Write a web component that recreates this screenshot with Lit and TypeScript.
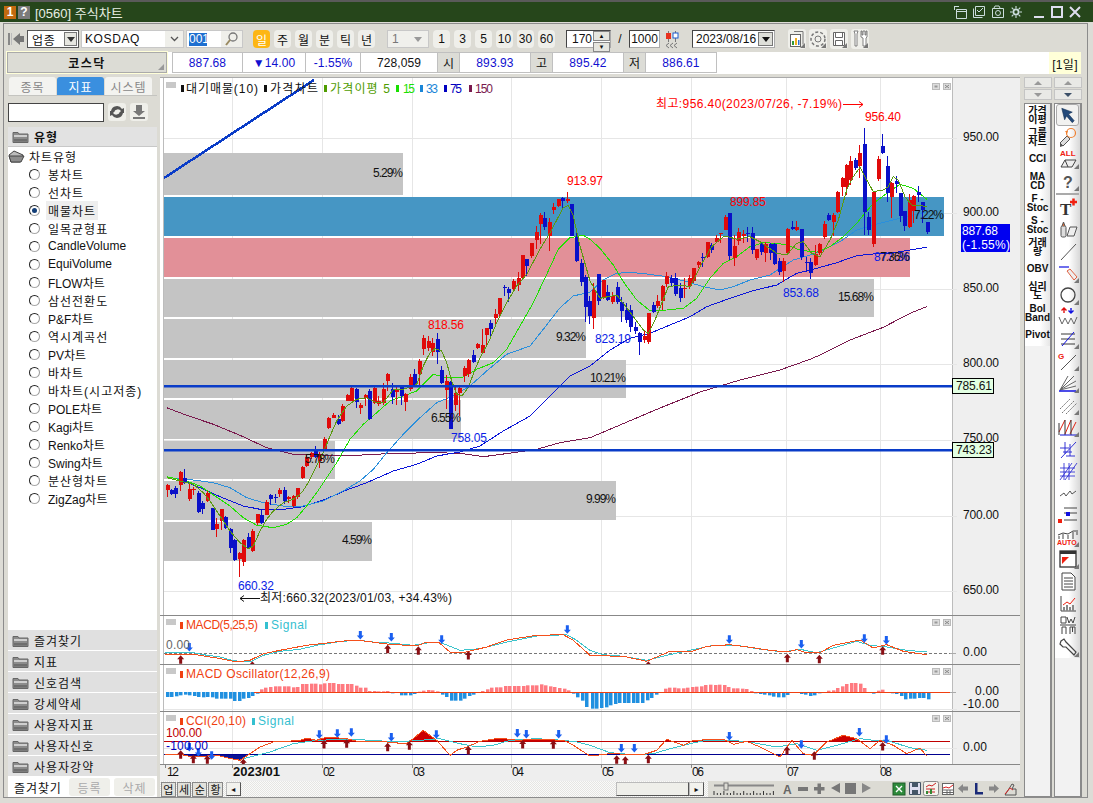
import { LitElement, html, svg, css } from 'lit';
import { customElement } from 'lit/decorators.js';

type Pt = [number, number];
// candle: zoom x, colour, body top, body bottom, wick top, wick bottom
type Candle = [number, string, number, number, number, number];

// the traces below were read off 3x crops, ox/oy is the crop origin
const toPage = (ox: number, oy: number, pts: number[][]): Pt[] =>
  pts.map(([x, y]) => [ox + x / 3, oy + y / 3]);
const mk = (ox: number, oy: number, rows: Candle[]): Candle[] =>
  rows.map(([x, c, t, b, wt, wb]) => [ox + x / 3, c, oy + t / 3, oy + b / 3, oy + wt / 3, oy + wb / 3]);

const CANDLES: Candle[] = [
  ...mk(160, 346, [
    [20,'r',418,432,415,455],[33,'b',432,444,428,446],[46,'b',425,443,420,456],[60,'r',378,418,375,435],
    [73,'b',395,410,368,412],[87,'r',428,458,415,465],[100,'r',428,432,422,445],[113,'b',440,497,436,503],
    [127,'b',470,488,465,503],[141,'r',442,465,436,470],[155,'b',487,552,485,552],[168,'r',533,547,515,573],
    [182,'r',490,525,488,550],[195,'b',513,545,510,548],[209,'b',548,605,545,620],[222,'b',582,642,580,645],
    [236,'r',620,638,618,692],[249,'r',582,648,580,660],[263,'b',573,605,562,608],[276,'r',556,615,550,618],
    [290,'r',505,533,503,536],[303,'b',507,532,490,535],[317,'r',468,507,462,508],[330,'b',447,460,443,475],
    [344,'b',454,458,445,472],[357,'r',431,443,425,453],[371,'b',432,465,422,472],[384,'r',453,460,450,472],
    [398,'r',450,480,447,484],[411,'r',427,454,425,457],[425,'r',363,396,360,398],[438,'r',332,358,328,365],
    [452,'r',322,335,318,340],[465,'b',313,333,300,335],[478,'r',325,345,318,365],[492,'r',278,310,272,312],
    [505,'r',215,244,212,247],[519,'r',207,215,202,218],[533,'b',220,235,208,237],[546,'r',180,225,175,228],
    [560,'r',148,165,145,166],[574,'r',126,165,124,166],[587,'b',130,170,126,185],[601,'r',178,188,172,205],
    [614,'r',148,158,143,180],[628,'b',135,220,128,222],[641,'r',126,172,123,175],[655,'r',165,174,150,180],
    [668,'r',128,170,110,175],[681,'r',85,105,82,135],[695,'b',130,155,112,175],[708,'r',128,136,122,175],
    [722,'b',124,152,118,177],[736,'r',145,170,140,195],[749,'r',93,130,85,135],[763,'b',85,120,70,125],
    [776,'r',45,85,40,120],
  ]),
  ...mk(160, 76, [
    [790,'r',786,819,777,837],[803,'r',795,816,780,825],[817,'r',800,828,786,840],[830,'b',788,828,770,863],
  ]),
  ...mk(160, 346, [
    [843,'b',72,110,60,115],[857,'r',105,133,88,190],[870,'b',108,248,105,250],[884,'r',142,178,120,195],
    [898,'r',125,140,120,210],[911,'r',65,90,60,108],[925,'r',43,85,40,95],[938,'b',27,48,12,50],
  ]),
  ...mk(160, 76, [
    [952,'r',804,816,801,820],[965,'r',807,831,758,834],[978,'r',756,778,755,805],[990,'b',740,758,732,788],
    [1005,'r',714,725,700,752],[1018,'r',667,715,665,718],[1032,'b',633,635,628,660],[1045,'b',640,652,632,677],
    [1058,'r',615,640,610,650],[1073,'r',605,625,588,645],[1086,'r',537,605,537,607],[1099,'b',548,570,548,598],
    [1113,'r',502,542,500,545],[1127,'r',468,492,450,518],[1140,'r',418,445,412,505],[1153,'b',427,455,408,462],
    [1167,'r',438,480,425,525],[1180,'r',393,402,380,412],[1194,'r',370,390,368,392],[1207,'b',365,373,362,400],
    [1221,'r',370,375,348,382],[1234,'b',385,482,385,482],[1248,'b',482,555,466,558],[1262,'b',562,618,548,628],
    [1275,'b',602,692,598,740],[1288,'b',675,720,660,745],
  ]),
  ...mk(590, 90, [
    [9,'r',600,685,580,718],[24,'b',552,632,552,645],[38,'r',570,622,570,628],[52,'b',605,628,585,632],
    [66,'r',617,635,605,640],[80,'b',590,635,575,640],[93,'b',635,662,620,695],[107,'b',660,690,640,700],
    [120,'b',660,712,645,725],[134,'b',712,725,695,730],[147,'b',730,758,725,795],[161,'r',738,750,720,760],
    [174,'r',668,755,668,760],[188,'b',645,665,635,668],[201,'r',632,648,615,655],[215,'r',588,632,585,660],
    [228,'r',558,582,545,590],[242,'b',565,580,555,590],[256,'b',563,610,550,620],[269,'b',595,625,578,635],
    [282,'r',595,598,565,625],[296,'r',565,590,555,598],[309,'r',533,572,533,578],[323,'r',515,525,512,532],
    [336,'b',500,503,490,532],[350,'r',456,500,455,503],[364,'b',464,480,460,490],[377,'r',444,455,435,460],
    [391,'r',430,432,428,457],[404,'r',380,418,375,420],[417,'b',370,500,370,510],[431,'r',468,505,435,528],
    [444,'r',425,452,415,465],[458,'r',433,440,420,460],[472,'b',430,432,410,455],[485,'b',430,482,410,490],
    [498,'r',478,505,478,510],[512,'b',462,485,455,495],[526,'r',462,488,455,515],[540,'b',463,490,460,510],
    [552,'b',463,522,460,525],[566,'b',512,545,505,555],[579,'r',512,542,505,578],[592,'r',417,490,415,495],
    [606,'b',410,416,392,420],[619,'r',410,418,392,422],[633,'b',417,500,417,510],[647,'b',517,520,500,545],
    [660,'b',515,548,505,568],[674,'r',492,525,465,528],[687,'r',462,490,460,495],[701,'r',402,442,392,445],
    [714,'b',376,392,370,395],[728,'r',374,395,370,440],[741,'r',306,367,304,370],[755,'r',263,290,262,320],
    [768,'r',225,290,222,315],[781,'r',212,270,198,285],[795,'b',210,235,205,240],[808,'r',188,228,165,265],
    [822,'b',162,365,114,435],[835,'b',382,420,365,435],[849,'r',305,460,303,472],[863,'r',207,268,198,272],
    [876,'b',168,190,132,192],[890,'b',228,308,198,335],[903,'r',278,320,275,382],[917,'b',272,282,258,310],
    [930,'b',310,380,308,395],[943,'b',363,408,363,422],[957,'r',330,412,313,415],[970,'r',318,362,315,400],
    [984,'b',307,317,288,335],[997,'b',335,360,335,398],[1011,'b',397,428,395,432],
  ]),
];

const MA5: Pt[] = [
  ...toPage(160, 346, [[20,395],[60,405],[100,415],[130,440],[150,465],[180,510],[210,555],[240,590],[265,608],[280,600],[300,555],[320,520],[340,495],[370,470],[400,460],[425,440],[445,410],[470,360],[490,320],[510,270],[530,225],[560,180],[590,160],[620,155],[650,170],[670,170],[700,130],[730,130],[770,115],[790,60],[810,20],[825,8],[845,15],[860,50],[875,105],[890,145],[905,150],[925,125],[945,70],[965,25]]),
  ...toPage(160, 76, [[985,800],[1010,740],[1040,680],[1070,630],[1100,595],[1140,520],[1170,470],[1210,395],[1225,388],[1240,420],[1260,510],[1290,615]]),
  ...toPage(590, 90, [[30,625],[80,615],[100,640],[130,680],[160,720],[175,730],[195,690],[215,640],[235,590],[270,585],[300,590],[330,530],[365,470],[400,440],[415,440],[440,448],[480,440],[510,455],[560,490],[590,495],[620,460],[640,455],[665,490],[690,500],[720,450],[745,390],[770,300],[790,260],[810,232],[830,270],[850,305],[880,300],[895,290],[910,260],[925,270],[945,320],[965,345],[985,345],[1010,350]]),
];
const MA15: Pt[] = [
  ...toPage(160, 346, [[20,392],[80,405],[120,420],[165,450],[210,480],[250,515],[290,538],[340,545],[380,535],[410,515],[440,480],[470,440],[500,395],[530,350],[570,280],[610,235],[650,200],[690,165],[730,150],[770,135],[820,85],[860,95],[905,95],[950,70],[1000,50],[1040,10]]),
  ...toPage(160, 76, [[1080,750],[1120,680],[1160,595],[1195,520],[1230,485],[1270,478],[1290,490]]),
  ...toPage(590, 90, [[30,475],[70,525],[100,575],[140,630],[180,662],[230,660],[280,655],[320,625],[360,565],[400,520],[440,500],[480,470],[520,458],[560,460],[590,465],[630,480],[680,487],[720,470],[760,440],[800,400],[850,340],[890,310],[930,283],[970,295],[1010,328]]),
];
const MA33: Pt[] = [
  ...toPage(160, 346, [[20,392],[60,400],[100,402],[160,410],[210,425],[260,455],[310,470],[370,480],[430,480],[490,465],[550,435],[600,405],[640,370],[680,320],[730,265],[780,215],[830,170],[880,150],[930,120],[980,75],[1040,25],[1110,0]]),
  ...toPage(160, 76, [[1150,760],[1200,695],[1240,660],[1290,648]]),
  ...toPage(590, 90, [[40,570],[80,550],[120,547],[170,552],[230,560],[290,575],[340,590],[390,600],[430,590],[480,570],[540,555],[570,535],[610,510],[660,495],[700,480],[750,455],[800,420],[850,405],[900,392],[950,380],[1010,365]]),
];
const MA75: Pt[] = [
  ...toPage(160, 346, [[20,392],[60,400],[120,425],[180,452],[250,480],[300,490],[370,490],[430,482],[500,458],[560,432],[620,410],[700,375],[770,355],[830,330],[900,318],[960,300],[1030,255],[1110,210],[1180,140],[1230,90],[1290,60]]),
  ...toPage(590, 90, [[60,780],[120,745],[180,730],[240,705],[300,680],[350,650],[420,625],[490,602],[560,585],[620,550],[680,535],[740,518],[800,497],[850,492],[900,490],[960,480],[1010,472]]),
];
const MA150: Pt[] = [
  ...toPage(160, 346, [[20,185],[80,208],[160,235],[240,268],[320,305],[400,325],[480,328],[560,330],[640,325],[720,322],[820,320],[900,322],[970,332],[1060,320],[1130,310],[1200,290],[1290,275]]),
  [620, 425],[660, 408],[700, 392],[740, 380],[780, 370],
  ...toPage(590, 90, [[660,808],[690,795],[780,750],[880,712],[960,670],[1010,650]]),
];

const MACD_SIG: Pt[] = [
  ...toPage(160, 612, [[15,122],[100,122],[130,128],[180,135],[220,146],[270,150],[310,130],[360,118],[420,112],[470,100],[530,90],[590,84],[640,90],[700,94],[760,100],[820,90],[850,95],[900,115],[960,110],[1040,90],[1130,72],[1220,68],[1250,85],[1290,115]]),
  ...toPage(590, 612, [[40,128],[100,133],[170,145],[230,130],[300,115],[370,100],[440,100],[500,110],[580,120],[630,112],[680,122],[740,105],[800,88],[840,100],[890,105],[950,115],[1010,120]]),
];
const MACD_LINE: Pt[] = [
  ...toPage(160, 612, [[15,127],[100,127],[170,138],[230,150],[270,145],[310,125],[360,115],[440,100],[500,93],[580,84],[620,88],[680,96],[770,102],[800,90],[835,90],[870,120],[910,122],[980,105],[1040,84],[1130,70],[1210,68],[1240,85],[1290,130]]),
  ...toPage(590, 612, [[60,132],[110,135],[170,148],[240,118],[300,120],[350,103],[420,98],[480,106],[540,115],[590,120],[620,113],[650,122],[690,122],[730,100],[810,84],[850,108],[890,98],[940,118],[1010,128]]),
];
const CCI_SIG: Pt[] = [
  ...toPage(160, 612, [[250,440],[330,420],[400,395],[470,385],[560,382],[640,385],[700,390],[780,385],[840,380],[900,395],[950,405],[1000,400],[1050,385],[1130,380],[1210,385],[1250,390],[1290,400]]),
  ...toPage(590, 612, [[60,422],[130,428],[190,425],[240,410],[300,395],[350,385],[430,385],[490,392],[560,405],[620,395],[680,415],[740,400],[810,380],[850,385],[900,388],[960,407],[1010,415]]),
];
const CCI_LINE: Pt[] = [
  ...toPage(160, 612, [[15,427],[60,427],[100,435],[140,432],[170,430],[200,437],[240,445],[270,425],[300,405],[340,390],[380,388],[420,385],[440,378],[470,385],[500,375],[560,380],[600,390],[660,388],[700,392],[740,395],[760,380],[790,355],[830,385],[870,430],[890,415],[920,405],[960,388],[1020,378],[1070,385],[1130,382],[1210,385],[1240,400],[1290,432]]),
  ...toPage(590, 612, [[60,425],[160,428],[200,415],[230,382],[280,400],[310,385],[400,382],[430,397],[470,388],[510,405],[570,435],[605,385],[640,425],[670,430],[710,390],[760,370],[800,380],[840,410],[870,385],[910,400],[950,425],[990,408],[1010,432]]),
];

// oscillator bars: zoom x, height in zoom px (up is positive)
const OSC: Pt[] = [
  ...toPage(160, 0, [[20,-15],[33,-15],[47,-13],[60,-10],[74,-8],[87,-10],[101,-12],[114,-15],[128,-16],[141,-15],[155,-16],[168,-20],[182,-20],[195,-20],[209,-20],[222,-27],[236,-27],[249,-20],[263,-18],[276,-12],[290,-5],[303,8],[316,13],[330,15],[344,17],[357,17],[371,17],[384,17],[398,14],[411,15],[425,24],[438,24],[452,25],[465,25],[479,23],[492,26],[506,27],[520,27],[533,24],[547,24],[560,24],[574,24],[587,19],[601,13],[614,13],[628,3],[641,3],[655,2],[668,2],[682,3],[695,-4],[709,-3],[722,-10],[736,-10],[750,-10],[763,-6],[777,1],[790,4],[804,6],[817,5],[831,2],[845,-8],[858,-15],[872,-26],[885,-26],[899,-26],[912,-20],[926,-12],[939,-8],[953,-2],[966,3],[980,8],[993,13],[1007,14],[1020,14],[1034,18],[1048,18],[1061,18],[1075,18],[1088,18],[1102,20],[1115,20],[1129,20],[1143,23],[1156,20],[1170,17],[1183,15],[1197,12],[1211,10],[1224,5],[1238,-5],[1251,-16],[1265,-26],[1278,-45]]),
  ...toPage(590, 0, [[5,-50],[19,-50],[33,-48],[47,-46],[60,-40],[74,-36],[88,-33],[101,-33],[115,-33],[129,-33],[142,-33],[156,-33],[170,-25],[183,-18],[197,-8],[210,-2],[224,10],[238,13],[251,13],[265,11],[278,11],[292,13],[306,15],[319,16],[333,17],[346,21],[360,22],[374,21],[387,22],[401,21],[414,15],[428,11],[442,11],[455,10],[469,9],[482,3],[496,-4],[510,-6],[523,-8],[537,-10],[550,-14],[564,-16],[578,-16],[591,-9],[605,-2],[632,-6],[646,-8],[660,-12],[673,-10],[687,-4],[714,4],[728,5],[741,12],[755,17],[768,24],[782,27],[796,27],[809,25],[823,12],[836,-3],[850,-5],[864,4],[877,7],[891,-2],[905,-4],[918,-6],[932,-12],[946,-22],[959,-20],[973,-20],[987,-18],[1000,-18],[1014,-22]]),
];

// x in zoom px, top of the arrow in zoom px
const MACD_UP = [...toPage(160, 612, [[62,130],[277,148],[683,98],[775,103],[925,117]]), ...toPage(590, 612, [[175,148],[592,125],[688,128],[878,103]])];
const MACD_DOWN = [...toPage(160, 612, [[88,93],[601,57],[694,63],[845,70],[1222,40]]), ...toPage(590, 612, [[418,70],[634,84],[823,67],[889,72]])];
const CCI_UP = [...toPage(160, 612, [[62,415],[100,428],[142,430],[250,440],[492,384],[560,382],[683,392],[748,388],[925,402],[1088,384],[1180,385]]), ...toPage(590, 612, [[80,430],[106,433],[175,428],[591,403],[673,418],[878,390]])];
const CCI_DOWN = [...toPage(160, 612, [[88,393],[115,408],[155,418],[478,355],[532,352],[574,349],[694,363],[829,355],[1072,351],[1099,354],[1196,354]]), ...toPage(590, 612, [[94,396],[133,396],[418,360],[634,385],[808,348],[889,370]])];

const BANDS = [
  { y: 153, h: 42, w: 403, c: '#c4c4c4', label: '5.29%', ly: 173 },
  { y: 197, h: 39, w: 944, c: '#4696c4', label: '', ly: 0 },
  { y: 238, h: 39, w: 910, c: '#e29098', label: '', ly: 0 },
  { y: 279, h: 38, w: 874, c: '#c4c4c4', label: '15.68%', ly: 297 },
  { y: 319, h: 39, w: 586, c: '#c4c4c4', label: '9.32%', ly: 337 },
  { y: 360, h: 38, w: 626, c: '#c4c4c4', label: '10.21%', ly: 378 },
  { y: 400, h: 39, w: 461, c: '#c4c4c4', label: '6.55%', ly: 418 },
  { y: 441, h: 38, w: 335, c: '#c4c4c4', label: '5.78%', ly: 459 },
  { y: 481, h: 39, w: 616, c: '#c4c4c4', label: '9.99%', ly: 499 },
  { y: 522, h: 39, w: 372, c: '#c4c4c4', label: '4.59%', ly: 540 },
];

const GRID_X = [232, 322, 412, 511, 601, 691, 786, 880];
const GRID_Y = [138, 213, 289, 364, 440, 516, 591];
const AXIS: [number, string][] = [[137, '950.00'], [212, '900.00'], [288, '850.00'], [363, '800.00'], [438, '750.00'], [515, '700.00'], [590, '650.00']];

const TREE = ['봉차트', '선차트', '매물차트', '일목균형표', 'CandleVolume', 'EquiVolume', 'FLOW차트', '삼선전환도', 'P&F차트', '역시계곡선', 'PV차트', '바차트', '바차트(시고저종)', 'POLE차트', 'Kagi차트', 'Renko차트', 'Swing차트', '분산형차트', 'ZigZag차트'];
const FOLDERS = ['즐겨찾기', '지표', '신호검색', '강세약세', '사용자지표', '사용자신호', '사용자강약'];
const INDICATORS = [['가격', '이평'], ['그룹', '차트'], ['CCI'], ['MA', 'CD'], ['F -', 'Stoc'], ['S -', 'Stoc'], ['거래', '량'], ['OBV'], ['심리', '도'], ['Bol', 'Band'], ['Pivot']];

const pts = (p: Pt[]) => p.map(([x, y]) => `${x.toFixed(1)},${y.toFixed(1)}`).join(' ');
// the app draws aliased GDI lines, so no antialiasing here either
const line = (p: Pt[], color: string, w = 1) =>
  svg`<polyline points=${pts(p)} fill="none" stroke=${color} stroke-width=${w} stroke-linejoin="round" shape-rendering="crispEdges"></polyline>`;

// the original font is a bitmap one: 12px for hangul, 6px for everything else
const textW = (s: string) => [...s].reduce((w, c) => w + (/[가-힣]/.test(c) ? 12 : 6), 0);
const label = (x: number, y: number, s: string, cls = '') =>
  svg`<text class=${'t ' + cls} x=${x} y=${y + 4} textLength=${textW(s)} lengthAdjust="spacing">${s}</text>`;
const labelEnd = (xe: number, y: number, s: string, cls = '') => label(xe - textW(s), y, s, cls);

const upArrow = ([x, y]: Pt) =>
  svg`<path d="M${x} ${y}l3.5 4h-2v4.5h-3V${y + 4}h-2z" fill="#8a0f14"></path>`;
const downArrow = ([x, y]: Pt) =>
  svg`<path d="M${x} ${y + 8.5}l3.5-4h-2V${y}h-3v4.5h-2z" fill="#1a5ff0"></path>`;

const paneBtns = (y: number) => svg`
  <rect x="932.5" y=${y + 0.5} width="7" height="6" fill="#ddd" stroke="#bbb"></rect>
  <rect x="934.5" y=${y + 2.5} width="3" height="2" fill="#999"></rect>
  <rect x="943.5" y=${y + 0.5} width="7" height="6" fill="#ddd" stroke="#bbb"></rect>
  <path d=${`M945 ${y + 2}l4 3m0-3l-4 3`} stroke="#888" fill="none"></path>`;

const legendDot = (x: number, y: number, c: string) => svg`<rect x=${x} y=${y} width="3" height="7" fill=${c}></rect>`;
const paneTag = (y: number) => svg`<rect x="166" y=${y} width="10" height="6" fill="#c8c8c8"></rect>`;

const folderIcon = html`<svg width="17" height="13" viewBox="0 0 17 13">
  <path d="M1 2.5h5l1 1.5h9v8.5H1z" fill="#8c8c8c" stroke="#666"></path>
  <path d="M2 5h13v2H2z" fill="#cfcfcf"></path>
  <path d="M2 9h13v2.500H2z" fill="#6e6e6e"></path>
</svg>`;
const openFolder = html`<svg width="17" height="13" viewBox="0 0 17 13">
  <path d="M1 5l5-4 9 4-3 7H3z" fill="#bdbdbd" stroke="#444"></path>
  <path d="M1 6h11l4 0-3 6H3z" fill="#8d8d8d" stroke="#444"></path>
</svg>`;

const toolIcon = (body: unknown, corner = false, pressed = false) => html`<div class="ic ${pressed ? 'pressed' : ''}">
  <svg width="22" height="22" viewBox="0 0 22 22">${body}</svg>
  ${corner ? html`<i class="corner"></i>` : ''}
</div>`;

const TOOLS = [
  toolIcon(svg`<path d="M5 4l11 4-4 2 6 7-2 2-6-7-2 4z" fill="#234a7a" stroke="#0d2a50" stroke-width=".6"></path>`, false, true),
  toolIcon(svg`<path d="M3 17l7-7 3 3-7 7z" fill="#ddd" stroke="#555"></path><path d="M3 17l3 3-3 1z" fill="#555"></path><circle cx="14" cy="7" r="4.500" fill="none" stroke="#f08030" stroke-width="1.200"></circle><path d="M8 5l3 0-1 3z" fill="#f08030"></path>`),
  toolIcon(svg`<text class="mini red-b" x="3" y="8">ALL</text><path d="M4 19l4-7h11l-4 7z" fill="#eee" stroke="#444"></path><path d="M8 12l3 7" stroke="#444"></path>`, true),
  toolIcon(svg`<text class="qm" x="6" y="18">?</text>`, true),
];
const TOOLS2 = [
  toolIcon(svg`<text class="tee" x="3" y="19">T</text><path d="M13 6h7M16.500 2.500v7" stroke="#f02010" stroke-width="2.500"></path>`),
  toolIcon(svg`<rect x="4" y="8" width="5" height="11" rx="1.500" fill="#ddd" stroke="#555"></rect><path d="M5 8l1.500-4 1.500 4" fill="#d87040" stroke="#555"></path><path d="M10 18l3-9h7l-3 9z" fill="#eee" stroke="#555"></path>`),
  toolIcon(svg`<path d="M4 20L19 4" stroke="#555"></path>`),
  toolIcon(svg`<path d="M2 5h10" stroke="#1010e0" stroke-width="1.200"></path><path d="M10 9l3-2 7 8-3 3z" fill="#eee" stroke="#e06040"></path>`, true),
  toolIcon(svg`<circle cx="11" cy="11" r="7" fill="none" stroke="#444" stroke-width="1.300"></circle>`, true),
  toolIcon(svg`<path d="M7 2v5M4.500 4.500L7 2l2.500 2.500" stroke="#e01010" fill="none" stroke-width="1.400"></path><path d="M14 2v5M11.500 4.500L14 7l2.500-2.500" stroke="#1010e0" fill="none" stroke-width="1.400"></path><path d="M2 11l3 7 3-6 3 6 3-6 3 6 3-7" stroke="#666" fill="none"></path>`),
  toolIcon(svg`<path d="M4 6h14M4 11h14M4 16h14" stroke="#222" stroke-width=".9"></path><path d="M5 18L17 4" stroke="#1010e0"></path>`, true),
  toolIcon(svg`<text class="mini red-b" x="1" y="9">G</text><path d="M4 20L19 5" stroke="#555"></path>`, true),
  toolIcon(svg`<path d="M3 18L17 4M3 18L19 9M3 18L19 14M3 18L11 4" stroke="#666" fill="none"></path><path d="M2 19h17" stroke="#1010e0" stroke-width="1.500"></path>`, true),
  toolIcon(svg`<path d="M3 15L13 5M5 19L17 7M9 20L20 9" stroke="#777" stroke-dasharray="2 1" fill="none"></path>`, true),
  toolIcon(svg`<path d="M2 16L8 4M8 18L14 4M13 18L19 6" stroke="#e02010" fill="none"></path><path d="M2 7v12M8 4v15M14 4v15" stroke="#333" fill="none"></path><path d="M3 19h17" stroke="#1010d0"></path>`, true),
  toolIcon(svg`<path d="M4 20L19 4M3 10h9M6 14h9M9 18h9M8 4v12M13 6v12" stroke="#2020d0" fill="none" stroke-width=".9"></path>`),
  toolIcon(svg`<path d="M3 20L15 3M8 20L20 3M3 8h15M3 12h15M3 16h15M7 3v17M12 3v17" stroke="#2020d0" fill="none" stroke-width=".8"></path>`),
  toolIcon(svg`<path d="M3 14l4-3 2 3 4-5 2 3 4-3" stroke="#555" fill="none"></path>`),
  toolIcon(svg`<path d="M7 4h13M7 9h13M7 16h13" stroke="#444" fill="none"></path><rect x="9" y="8" width="4" height="4" fill="#1010e0"></rect><rect x="1" y="15" width="4" height="4" fill="#f02010"></rect>`),
  toolIcon(svg`<path d="M1 9l5-2 5 1 5-3 3 0M2 10v3M6 8v5M11 9v4M16 6v7M20 4v5" stroke="#444" fill="none"></path><text class="auto" x="0" y="19">AUTO</text>`, true),
  toolIcon(svg`<rect x="3" y="3" width="16" height="16" fill="#fff" stroke="#333" stroke-width="1.300"></rect><path d="M3 3h16v3H3z" fill="#333"></path><path d="M5 9h7l-7 7z" fill="#f02010"></path>`, true),
  toolIcon(svg`<path d="M5 3h9l4 4v13H5z" fill="#fff" stroke="#444"></path><path d="M7 8h9M7 11h9M7 14h9M7 17h9" stroke="#444"></path>`),
  toolIcon(svg`<path d="M4 4v15h15" stroke="#444" fill="none"></path><path d="M6 13l4-3 3 2 5-6" stroke="#f02010" fill="none"></path><path d="M6 15h2v4H6zM9 13h2v6H9zM12 15h2v4h-2zM15 13h2v6h-2z" fill="#888"></path>`),
  toolIcon(svg`<path d="M4 3h5v6H4zM10 3l2 6 2-4 2 4 2-6M3 11h16M5 13v7M5 13h4v7M13 13v7M13 13h5v7M15.500 13v5" stroke="#444" fill="none"></path>`),
  toolIcon(svg`<path d="M4 5l3-2 2 3 2 2 8 8-2 3-8-8-3 0-3-3z" fill="none" stroke="#444" stroke-width="1.200"></path>`, true),
];

@customElement('app-root')
export class AppRoot extends LitElement {
  static styles = css`
    :host {
      display: block;
      width: 1093px;
      height: 803px;
      overflow: hidden;
      font: 12px "Liberation Sans", "Noto Sans CJK KR", sans-serif;
      color: #111;
    }
    .root {
      height: 803px;
      display: flex;
      flex-direction: column;
      background: #dddcd6;
    }
    svg { display: block; }

    /* title bar */
    .title {
      flex: none;
      height: 20px;
      border-top: 2px solid #5a5a5a;
      background: #26461b;
      color: #e8efe4;
      display: flex;
      align-items: center;
      padding: 0 12px 0 4px;
      font-size: 13px;
    }
    .badge {
      width: 12px;
      height: 13px;
      margin-right: 2px;
      background: #c26a10;
      color: #fff;
      font: bold 12px "Liberation Sans", sans-serif;
      text-align: center;
      line-height: 13px;
    }
    .badge.q { background: #7b7b7b; margin-right: 5px; }
    .title-icons { margin-left: auto; display: flex; gap: 5px; align-items: center; }
    .win { margin-left: 1px; }
    .win.min { margin-left: 7px; }

    .frame {
      flex: 1;
      margin: 1px 5px 5px 3px;
      border: 1px solid #8c8c8c;
      background: #dcdbd4;
      min-height: 0;
      display: flex;
      flex-direction: column;
    }

    /* first toolbar row */
    .bar1 {
      flex: none;
      margin-top: 4px;
      height: 22px;
      padding-left: 3px;
      display: flex;
      align-items: center;
    }
    .back { width: 18px; margin-right: 2px; }
    .field {
      height: 18px;
      background: #fff;
      border: 1px solid #555;
      box-sizing: border-box;
      display: flex;
      align-items: center;
      letter-spacing: .6px;
    }
    .sel1 { width: 52px; margin-right: 2px; padding-left: 4px; }
    .arrbtn {
      margin-left: auto;
      margin-right: 1px;
      width: 13px;
      height: 14px;
      border: 1px solid #777;
      background: #e6e6e0;
      box-sizing: border-box;
      display: flex;
      align-items: center;
      justify-content: center;
    }
    .tri { width: 0; height: 0; border: 4px solid transparent; border-top: 5px solid #333; border-bottom: 0; }
    .tri.g { border-top-color: #999; }
    .sel2 { width: 103px; margin-right: 2px; padding-left: 3px; border-color: #c8c8c8; }
    .chev {
      margin-left: auto;
      width: 18px;
      height: 16px;
      background: #efefea;
      color: #555;
      display: flex;
      align-items: center;
      justify-content: center;
    }
    .code { width: 57px; margin-right: 10px; padding-left: 2px; border-color: #c8c8c8; }
    .code b { background: #1f6fd0; color: #fff; font-weight: 400; letter-spacing: 0; height: 13px; line-height: 13px; width: 18px; }
    .search { margin-left: auto; width: 21px; height: 16px; background: #efefea; }
    .tb {
      width: 17px;
      height: 18px;
      margin-right: 4px;
      background: #efefea;
      border-radius: 4px;
      font-size: 12px;
      display: flex;
      align-items: center;
      justify-content: center;
      flex: none;
    }
    .tb.on { background: #fdb614; color: #fff; }
    .sel3 { width: 42px; margin: 0 4px 0 8px; padding-left: 4px; border-color: #c8c8c8; background: #f0f0ec; color: #777; }
    .sel3 .tri { margin-left: auto; margin-right: 6px; }
    .spin { width: 45px; margin: 0 0 0 7px; border-color: #444 #aaa #aaa #444; justify-content: flex-end; letter-spacing: 0; }
    .spinb { width: 17px; height: 16px; margin-left: 1px; display: flex; flex-direction: column; gap: 1px; }
    .spinb i { flex: 1; background: #e6e6e0; border: 1px solid #888; display: flex; align-items: center; justify-content: center; font: 7px "DejaVu Sans", sans-serif; }
    .slash { width: 18px; text-align: center; }
    .total { width: 31px; border-color: #444 #aaa #aaa #444; letter-spacing: 0; justify-content: center; }
    .date { width: 83px; margin-left: 12px; border-color: #444 #aaa #aaa #444; padding-left: 3px; letter-spacing: 0; }
    .date .arrbtn { width: 15px; background: #dedfd9; }
    .date .tri { border-top-color: #111; }
    .mid-ic { width: 16px; margin-left: 4px; }
    .end-ic { width: 18px; height: 20px; background: #efefea; border-radius: 3px; margin-left: 3px; position: relative; }
    .end-ic.first { margin-left: 13px; }
    .corner { position: absolute; right: 1px; bottom: 1px; width: 0; height: 0; border-left: 5px solid transparent; border-bottom: 5px solid #777; }

    /* second toolbar row */
    .bar2 {
      flex: none;
      margin-top: 2px;
      height: 22px;
      background: #fff;
      display: flex;
      align-items: stretch;
      margin-left: 2px;
      margin-right: 6px;
    }
    .market {
      width: 160px;
      box-sizing: border-box;
      background: #dcdcd5;
      border: 1px solid #aaa;
      outline: 1px solid #ffffd8;
      font-weight: 700;
      letter-spacing: 1.500px;
      display: flex;
      align-items: center;
      justify-content: center;
      position: relative;
      margin: 0 5px 1px 1px;
    }
    .grip { position: absolute; right: 2px; bottom: 2px; }
    .cell {
      box-sizing: border-box;
      border: 1px solid #c0c0c0;
      border-left: 0;
      display: flex;
      align-items: center;
      justify-content: center;
      color: #1010d0;
      margin-bottom: 1px;
      letter-spacing: .1px;
    }
    .cell.k { color: #111; background: #dcdcd6; }
    .cell.n { color: #111; }
    .cell.w1 { width: 71px; border-left: 1px solid #c0c0c0; }
    .cell.w2 { width: 63px; }
    .cell.w3 { width: 55px; }
    .cell.w4 { width: 77px; }
    .cell.w5 { width: 71px; }
    .cell.kw { width: 22px; }
    .range {
      margin-left: auto;
      width: 32px;
      background: #ffffd8;
      display: flex;
      align-items: center;
      justify-content: center;
      letter-spacing: .3px;
    }

    /* main area */
    .main {
      flex: 1;
      min-height: 0;
      margin-top: 3px;
      margin-left: 4px;
      display: flex;
    }
    .side {
      width: 149px;
      flex: none;
      display: flex;
      flex-direction: column;
      background: #fff;
    }
    .tabs { height: 18px; flex: none; display: flex; padding-left: 1px; background: #dcdbd4; border-bottom: 1px solid #c4c4c0; box-sizing: content-box; }
    .tab {
      width: 47px;
      margin-right: 1px;
      background: #f3f3f0;
      color: #888;
      border-radius: 3px 3px 0 0;
      display: flex;
      align-items: center;
      justify-content: center;
      letter-spacing: 1px;
    }
    .tab.on { background: #3a8fdf; color: #fff; }
    .finder { height: 31px; flex: none; background: #dcdbd4; display: flex; align-items: center; padding-top: 1px; box-sizing: border-box; }
    .finder .inp { width: 96px; height: 19px; box-sizing: border-box; border: 1px solid #444; background: #fff; margin-right: 4px; }
    .finder .ib { width: 18px; height: 18px; background: #efefea; border-radius: 3px; margin-right: 4px; }
    .head { height: 20px; flex: none; background: #e2e2e2; border-bottom: 1px solid #c8c8c8; box-sizing: border-box; display: flex; align-items: center; padding-left: 4px; font-weight: 700; letter-spacing: 1px; }
    .head svg { margin-right: 5px; }
    .tree { flex: 1; min-height: 0; }
    .row { height: 18px; display: flex; align-items: center; }
    .row.root-row { padding-left: 0; letter-spacing: 1px; }
    .row.root-row svg { margin-right: 4px; }
    .radio {
      width: 11px;
      height: 11px;
      box-sizing: border-box;
      margin: 0 8px 0 21px;
      border-radius: 50%;
      border: 1.500px solid;
      border-color: #222 #999 #aaa #222;
      display: flex;
      align-items: center;
      justify-content: center;
    }
    .radio.on::after { content: ""; width: 5px; height: 5px; border-radius: 50%; background: #123e78; }
    .rtext.h { letter-spacing: 1px; }
    .rtext.sel { background: #eeeeee; margin-left: -2px; padding: 1px 2px; }
    .folder {
      height: 20px;
      flex: none;
      background: #e0e0e0;
      border-bottom: 1px solid #fff;
      display: flex;
      align-items: center;
      padding-left: 4px;
      letter-spacing: 1px;
    }
    .folder svg { margin-right: 5px; }
    .foot { height: 20px; flex: none; display: flex; align-items: center; padding-left: 6px; letter-spacing: .9px; white-space: nowrap; }
    .foot-label { width: 55px; flex: none; }
    .fbtn { width: 41px; height: 18px; background: #efefea; color: #aaa; border-radius: 3px; display: flex; align-items: center; justify-content: center; margin-right: 4px; flex: none; }

    /* chart */
    .chart {
      width: 860px;
      flex: none;
      margin-left: 3px;
      background: #eee;
      border-top: 1px solid #aaa;
      display: flex;
      flex-direction: column;
    }
    .pane { flex: none; border-top: 1px solid #888; background: #fff; }
    .pane.first { border-top: 0; }
    .t { font: 12px "Liberation Sans", "Noto Sans CJK KR", sans-serif; fill: #111; }
    .ax { fill: #111; }
    .red { fill: #f00; }
    .blu { fill: #0a1ee6; }
    .grn { fill: #4f9c00; }
    .lime { fill: #19e000; }
    .sky { fill: #1a86d8; }
    .navy { fill: #0000c0; }
    .wine { fill: #7a1a4e; }
    .org { fill: #f04010; }
    .tea { fill: #34c0d0; }
    .gry { fill: #666; }
    .dred { fill: #c00000; }
    .wh { fill: #fff; }
    .bold { font-weight: 700; font-size: 13px; }
    .ahead { font-weight: 700; }

    .bottom {
      height: 16px;
      flex: none;
      display: flex;
      align-items: center;
      background: repeating-conic-gradient(#e6e6e2 0 25%, #fafafa 0 50%) 0 0 / 2px 2px;
    }
    .btab {
      width: 15px;
      height: 15px;
      box-sizing: border-box;
      border: 1px solid #888;
      background: #e2e2dc;
      font-size: 11px;
      margin-left: 1px;
      display: flex;
      align-items: center;
      justify-content: center;
    }
    .bbtn {
      width: 15px;
      height: 14px;
      margin-left: 3px;
      box-sizing: border-box;
      background: #f2f2ee;
      border: 1px solid #bbb;
      border-right-color: #555;
      border-bottom-color: #555;
      font: 8px "DejaVu Sans", sans-serif;
      display: flex;
      align-items: center;
      justify-content: center;
    }
    .thumb { margin-left: 375px; width: 75px; height: 14px; box-sizing: border-box; background: #efefea; border: 1px solid #bbb; border-right-color: #555; border-bottom-color: #555; }
    .bbtn.nx { margin-left: 0; }
    .ctrl { margin-left: 4px; flex: 1; height: 16px; display: flex; align-items: center; background: #dcdbd4; }

    /* right tool strips */
    .tools { width: 58px; flex: none; margin-left: 4px; display: flex; gap: 2px; }
    .tcol { width: 28px; display: flex; flex-direction: column; }
    .step { height: 11px; flex: none; box-sizing: border-box; margin-bottom: 1px; background: #e9e9e6; border: 1px solid #c4c4c4; display: flex; align-items: center; justify-content: center; }
    .step i { width: 0; height: 0; border: 4px solid transparent; }
    .step i.u { border-bottom: 4px solid #999; border-top: 0; }
    .step i.d { border-top: 4px solid #999; border-bottom: 0; }
    .step i.k { border-top-color: #3c5068; }
    .panel {
      margin-top: 2px;
      flex: 1;
      border: 1px solid #8a8a8a;
      border-width: 1px 2px 1px 1px;
      background: #f2f2f2;
      min-height: 0;
    }
    .lab { background: linear-gradient(90deg, #fff 60%, #e6e6e6); }
    .ind {
      height: 22px;
      display: flex;
      flex-direction: column;
      align-items: center;
      justify-content: center;
      font: bold 10px/9.500px "Liberation Sans", "Noto Sans CJK KR", sans-serif;
      color: #111;
    }
    .icons { background: linear-gradient(90deg, #fff 55%, #d8d8d8); }
    .ic { height: 22px; position: relative; display: flex; justify-content: center; align-items: center; }
    .ic.pressed { background: #f2f2f0; border: 1px solid #aaa; border-radius: 3px; box-sizing: border-box; margin: 0 1px; }
    .sep { height: 2px; margin: 1px 1px 1px; background: #aaa; }
    .mini { font: bold 8px "Liberation Sans", sans-serif; }
    .red-b { fill: #f02010; }
    .qm { font: bold 16px "Liberation Sans", sans-serif; fill: #555; }
    .tee { font: bold 17px "Liberation Serif", serif; fill: #333; }
    .auto { font: bold 7px "Liberation Sans", sans-serif; fill: #f02010; }
  `;

  private mainPane() {
    return html`<svg width="860" height="537" viewBox="160 78 860 537">
      <rect x="953" y="78" width="67" height="537" fill="#efefef"></rect>
      <path d="M163.500 78V615M952.500 78V615" stroke="#bcbcbc" fill="none"></path>
      ${GRID_X.map((x) => svg`<path d=${`M${x + 0.5} 78V615`} stroke="#e6e6e6"></path>`)}
      ${GRID_Y.map((y) => svg`<path d=${`M164 ${y + 0.5}H957`} stroke="#e6e6e6"></path>`)}
      ${BANDS.map((b) => svg`<rect x="164" y=${b.y} width=${b.w - 164} height=${b.h} fill=${b.c}></rect>`)}
      ${AXIS.map(([y, s]) => label(963, y, s, 'ax'))}

      ${line([[164, 178], [314, 80]], '#0a3cc8', 2.5)}
      ${line(MA150, '#7a1a4e')}
      ${line(MA75, '#0a14d8')}
      ${line(MA33, '#2a8fdc')}
      ${line(MA15, '#1fe000')}
      ${CANDLES.map(([x, c, t, b, wt, wb]) => {
        const cx = Math.round(x);
        const col = c === 'r' ? '#e00a0a' : '#0a10c8';
        return svg`<rect x=${cx} y=${Math.round(wt)} width="1" height=${Math.max(1, Math.round(wb - wt))} fill=${col}></rect>
          <rect x=${cx - 1} y=${Math.round(t)} width="4" height=${Math.max(1, Math.round(b - t))} fill=${col}></rect>`;
      })}
      ${line(MA5, '#5a9a10')}

      ${BANDS.filter((b) => b.label).map((b) => labelEnd(b.w, b.ly, b.label))}
      ${labelEnd(944, 215, '7.22%')}

      <rect x="164" y="385" width="789" height="2.500" fill="#0a3cc8"></rect>
      <rect x="164" y="449" width="789" height="2.500" fill="#0a3cc8"></rect>

      ${paneTag(82)}
      ${legendDot(181, 85, '#111')}${label(186, 89, '대기매물(10)')}
      ${legendDot(264, 85, '#111')}${label(270, 89, '가격차트')}
      ${legendDot(324, 85, '#4f9c00')}${label(330, 89, '가격이평 5', 'grn')}
      ${legendDot(396, 85, '#19e000')}${label(403, 89, '15', 'lime')}
      ${legendDot(420, 85, '#1a86d8')}${label(426, 89, '33', 'sky')}
      ${legendDot(444, 85, '#0000c0')}${label(450, 89, '75', 'navy')}
      ${legendDot(469, 85, '#7a1a4e')}${label(475, 89, '150', 'wine')}
      ${paneBtns(83)}

      ${label(656, 104, '최고:956.40(2023/07/26, -7.19%)', 'red')}
      <path d="M843 104.500h20m-4-3l4 3-4 3" stroke="#f00" fill="none"></path>
      ${label(865, 117, '956.40', 'red')}
      ${label(567, 181, '913.97', 'red')}
      ${label(730, 202, '899.85', 'red')}
      ${label(428, 325, '818.56', 'red')}
      ${label(451, 438, '758.05', 'blu')}
      ${label(595, 339, '823.19', 'blu')}
      ${label(783, 293, '853.68', 'blu')}
      ${label(874, 257, '877.36', 'blu')}
      ${labelEnd(910, 257, '7.36%')}
      ${label(238, 586, '660.32', 'blu')}
      <path d="M260 598.500h-20m4-3l-4 3 4 3" stroke="#111" fill="none"></path>
      ${label(260, 598, '최저:660.32(2023/01/03, +34.43%)')}

      <rect x="952.500" y="378.500" width="41" height="15" fill="#e2ffe2" stroke="#000"></rect>
      ${label(956, 386, '785.61')}
      <rect x="952.500" y="442.500" width="41" height="15" fill="#e2ffe2" stroke="#000"></rect>
      ${label(956, 450, '743.23')}
      <rect x="961" y="224" width="49" height="28" fill="#0000f0"></rect>
      ${label(962, 231, '887.68', 'wh')}
      ${label(962, 245, '(-1.55%)', 'wh')}
    </svg>`;
  }

  private macdPane() {
    return html`<svg width="860" height="48" viewBox="160 616 860 48">
      <rect x="953" y="616" width="67" height="48" fill="#efefef"></rect>
      <path d="M163.500 616V664M952.500 616V664" stroke="#bcbcbc"></path>
      ${GRID_X.map((x) => svg`<path d=${`M${x + 0.5} 616V664`} stroke="#e6e6e6"></path>`)}
      <path d="M164 653.500H950" stroke="#777" stroke-dasharray="3 2"></path>
      <path d="M950 653.500h6" stroke="#aaa"></path>
      ${line(MACD_SIG, '#3cc4cc')}
      ${line(MACD_LINE, '#f4501c')}
      ${MACD_UP.map(upArrow)}
      ${MACD_DOWN.map(downArrow)}
      ${paneTag(619)}
      <rect x="180" y="622" width="3" height="7" fill="#f04010"></rect>
      ${label(186, 625, 'MACD(5,25,5)', 'org')}
      <rect x="265" y="622" width="3" height="7" fill="#34c0d0"></rect>
      ${label(271, 625, 'Signal', 'tea')}
      ${label(166, 645, '0.00', 'gry')}
      ${label(963, 652, '0.00')}
      ${paneBtns(619)}
    </svg>`;
  }

  private oscPane() {
    const zero = 692;
    return html`<svg width="860" height="46" viewBox="160 665 860 46">
      <rect x="953" y="665" width="67" height="46" fill="#efefef"></rect>
      <path d="M163.500 665V711M952.500 665V711" stroke="#bcbcbc"></path>
      ${GRID_X.map((x) => svg`<path d=${`M${x + 0.5} 665V711`} stroke="#e6e6e6"></path>`)}
      <path d="M164 709.500H957" stroke="#e6e6e6"></path>
      ${OSC.map(([x, h]) => {
        const px = Math.round(x) - 1;
        return h >= 0
          ? svg`<rect x=${px} y=${zero - h} width="3.500" height=${h} fill="#ff7a80"></rect>`
          : svg`<rect x=${px} y=${zero} width="3.500" height=${-h} fill="#2090e0"></rect>`;
      })}
      <path d="M254 692.500H950" stroke="#f04010"></path>
      <path d="M950 692.500h6" stroke="#aaa"></path>
      ${paneTag(668)}
      <rect x="180" y="671" width="3" height="7" fill="#f04010"></rect>
      ${label(186, 674, 'MACD Oscillator(12,26,9)', 'org')}
      ${label(975, 691, '0.00')}
      ${label(963, 704, '-10.00')}
      ${paneBtns(668)}
    </svg>`;
  }

  private cciPane() {
    const areaUp = `M${CCI_LINE[0][0]} 741L${pts(CCI_LINE).replace(/ /g, 'L')}L${CCI_LINE[CCI_LINE.length - 1][0]} 741Z`;
    const areaDn = `M${CCI_LINE[0][0]} 754L${pts(CCI_LINE).replace(/ /g, 'L')}L${CCI_LINE[CCI_LINE.length - 1][0]} 754Z`;
    return html`<svg width="860" height="52" viewBox="160 712 860 52">
      <defs>
        <clipPath id="above"><rect x="160" y="712" width="800" height="29"></rect></clipPath>
        <clipPath id="below"><rect x="160" y="754" width="800" height="10"></rect></clipPath>
      </defs>
      <rect x="953" y="712" width="67" height="52" fill="#efefef"></rect>
      <path d="M163.500 712V764M952.500 712V764" stroke="#bcbcbc"></path>
      ${GRID_X.map((x) => svg`<path d=${`M${x + 0.5} 712V764`} stroke="#e6e6e6"></path>`)}
      <path d="M164 748.500H957" stroke="#e6e6e6"></path>
      <path d=${areaUp} fill="#cc0000" clip-path="url(#above)"></path>
      <path d=${areaDn} fill="#0a1496" clip-path="url(#below)"></path>
      <path d="M164 741.500H950" stroke="#c00000"></path>
      <path d="M164 754.500H950" stroke="#000090"></path>
      ${line(CCI_SIG, '#3cc4cc')}
      ${line(CCI_LINE, '#f4501c')}
      ${CCI_UP.map(upArrow)}
      ${CCI_DOWN.map(downArrow)}
      ${paneTag(715)}
      <rect x="180" y="718" width="3" height="7" fill="#f04010"></rect>
      ${label(186, 721, 'CCI(20,10)', 'org')}
      <rect x="252" y="718" width="3" height="7" fill="#34c0d0"></rect>
      ${label(258, 721, 'Signal', 'tea')}
      ${label(166, 733, '100.00', 'dred')}
      ${label(166, 746, '-100.00', 'navy')}
      ${label(963, 747, '0.00')}
      ${paneBtns(715)}
    </svg>`;
  }

  private dateAxis() {
    const labels: [number, string][] = [[323, '02'], [413, '03'], [512, '04'], [602, '05'], [692, '06'], [787, '07'], [880, '08']];
    return html`<svg width="860" height="17" viewBox="160 764 860 17">
      <path d="M160 764.500H1020" stroke="#888"></path>
      <path d="M165.500 765v3" stroke="#888"></path>
      ${GRID_X.map((x) => svg`<path d=${`M${x + 0.5} 765v3`} stroke="#888"></path>`)}
      ${label(167, 772, '12')}
      <text class="t bold" x="233" y="776">2023/01</text>
      ${labels.map(([x, s]) => label(x, 772, s))}
    </svg>`;
  }

  private bottomCtrl() {
    return html`<svg width="312" height="16" viewBox="708 781 312 16">
      <path d="M714 785.500h60" stroke="#888" stroke-width="2"></path>
      <rect x="724" y="783" width="4" height="7" fill="#dcdbd4" stroke="#777"></rect>
      ${Array.from({ length: 19 }, (_, i) => svg`<path d=${`M${714 + i * 3.3} ${i % 3 === 0 ? 791 : 793}V795`} stroke="#333"></path>`)}
      <text class="t gry ahead" x="783" y="794">A</text>
      <rect x="798" y="787" width="10" height="4" fill="#777"></rect>
      <path d="M814 787h3.500v-3.500h3.500v3.500h3.500v3.500H821v3.500h-3.500V790.500H814z" fill="#777"></path>
      <path d="M840 783v10l-9-5z" fill="#777"></path>
      <rect x="845" y="783" width="11" height="11" fill="#777"></rect>
      <path d="M862 783v10l9-5z" fill="#888"></path>
      <rect x="893" y="783" width="12" height="12" fill="#2e8b3c" stroke="#1f5c28"></rect>
      <path d="M896 786l6 6m0-6l-6 6" stroke="#fff" stroke-width="1.400"></path>
      <path d="M909.500 782.500h11v12h-11z" fill="#dde" stroke="#456"></path>
      <path d="M912 783h6v4h-6zM912 790h6v4h-6z" fill="#456"></path>
      <rect x="923.500" y="781.500" width="15" height="14" rx="2" fill="#f4f4ee" stroke="#888"></rect>
      <path d="M926 787l3-2 3 1 4-3M926 789h9M926 792h9" stroke="#c22" fill="none"></path>
      <path d="M926 794v-3h2v3zM930 794v-5h2v5z" fill="#383"></path>
      <rect x="942.500" y="783.500" width="11" height="11" fill="#fff" stroke="#666"></rect>
      <path d="M943 788l3-1 3 1 4-3" stroke="#d22" fill="none"></path>
      <path d="M943 790h10M943 792.500h10M947 790v4M950 790v4" stroke="#666"></path>
      <path d="M968 786.500h-5v-2.500l-5 4.500 5 4.500v-2.500h5z" fill="#888"></path>
      <path d="M975 783h2.500v9h5.500v2.500h-8z" fill="#1a2a78"></path>
      <path d="M989 786.500h5v-2.500l5 4.500-5 4.500v-2.500h-5z" fill="#888"></path>
      <path d="M1005 795l7-11 2 1-2 4h4v6z" fill="none" stroke="#555"></path>
      <path d="M1005 794l5-6 3 2" fill="none" stroke="#d22"></path>
    </svg>`;
  }

  render() {
    return html`<div class="root">
      <div class="title">
        <span class="badge">1</span><span class="badge q">?</span>
        <span>[0560] 주식차트</span>
        <div class="title-icons">
          <svg width="14" height="14" viewBox="0 0 14 14"><path d="M3.500 4.500h10v9h-10z" fill="none" stroke="#cdd"></path><path d="M1 1h5v1H2v3H1z" fill="#cdd"></path><path d="M3.500 6.500h10" stroke="#cdd"></path></svg>
          <svg width="14" height="14" viewBox="0 0 14 14"><path d="M3.500 1.500h9v9h-9zM1.500 3.500v9h9" fill="none" stroke="#cdd"></path><path d="M5 5l2 2 4-4" stroke="#cdd" fill="none"></path></svg>
          <svg width="14" height="14" viewBox="0 0 14 14"><path d="M1.500 3.500h11v9h-11zM3 3l1-2h4l1 2" fill="none" stroke="#cdd"></path><circle cx="7" cy="8" r="2.500" fill="none" stroke="#cdd"></circle></svg>
          <svg width="12" height="14" viewBox="0 0 14 14"><circle cx="7" cy="7" r="3" fill="none" stroke="#cdd" stroke-width="2"></circle><path d="M7 0v3M7 11v3M0 7h3M11 7h3M2 2l2 2M10 10l2 2M2 12l2-2M10 4l2-2" stroke="#cdd" stroke-width="1.300"></path></svg>
          <svg class="win min" width="11" height="14" viewBox="0 0 11 14"><path d="M0 12h10" stroke="#dde" stroke-width="2"></path></svg>
          <svg class="win" width="12" height="12" viewBox="0 0 12 12"><rect x="1" y="1" width="10" height="10" fill="none" stroke="#dde" stroke-width="2"></rect></svg>
          <svg class="win" width="12" height="12" viewBox="0 0 12 12"><path d="M1 1l10 10M11 1L1 11" stroke="#dde" stroke-width="2"></path></svg>
        </div>
      </div>

      <div class="frame">
        <div class="bar1">
          <svg class="back" width="18" height="18" viewBox="0 0 18 18">
            <rect x="1" y="3" width="2" height="12" fill="#888"></rect>
            <rect x="4" y="3" width="1" height="12" fill="#bbb"></rect>
            <path d="M6 9l7-6v3h4v6h-4v3z" fill="#777"></path>
          </svg>
          <div class="field sel1">업종<span class="arrbtn"><i class="tri"></i></span></div>
          <div class="field sel2">KOSDAQ<span class="chev"><svg width="9" height="6" viewBox="0 0 9 6"><path d="M1 1l3.500 3.500L8 1" stroke="#555" fill="none" stroke-width="1.300"></path></svg></span></div>
          <div class="field code"><b>001</b>
            <span class="search"><svg width="21" height="16" viewBox="0 0 21 16"><circle cx="12" cy="6" r="4" fill="none" stroke="#777" stroke-width="1.300"></circle><path d="M9 9l-4 5" stroke="#9a8a60" stroke-width="2"></path></svg></span>
          </div>
          ${['일', '주', '월', '분', '틱', '년'].map((s, i) => html`<span class="tb ${i === 0 ? 'on' : ''}">${s}</span>`)}
          <div class="field sel3">1<i class="tri g"></i></div>
          ${['1', '3', '5', '10', '30', '60'].map((s) => html`<span class="tb">${s}</span>`)}
          <div class="field spin">170<span class="spinb"><i>▴</i><i>▾</i></span></div>
          <span class="slash">/</span>
          <div class="field total">1000</div>
          <svg class="mid-ic" width="16" height="20" viewBox="0 0 16 20">
            <path d="M4.500 2v11M11.500 2v11" stroke="#777"></path>
            <rect x="2" y="4" width="5" height="6" fill="#e8321e"></rect>
            <rect x="9" y="4" width="5" height="5" fill="#fff" stroke="#1c5fd0"></rect>
            <path d="M5 14l-3 2.500L5 19M9 14l-3 2.500L9 19M13 14l-3 2.500 3 2.500" stroke="#777" fill="none"></path>
          </svg>
          <div class="field date">2023/08/16<span class="arrbtn"><i class="tri"></i></span></div>
          <span class="end-ic first"><svg width="18" height="20" viewBox="0 0 18 20"><path d="M6 2.500h9v13" fill="none" stroke="#777"></path><rect x="2.500" y="5.500" width="10" height="12" fill="#fff" stroke="#666"></rect><path d="M4 16v-4h2v4z" fill="#2f9a3a"></path><path d="M7 16V9h2v7z" fill="#f0b020"></path><path d="M10 16v-5h1.500v5z" fill="#3070d0"></path></svg><i class="corner"></i></span>
          <span class="end-ic"><svg width="18" height="20" viewBox="0 0 18 20"><circle cx="9" cy="10" r="3" fill="none" stroke="#777"></circle><circle cx="9" cy="10" r="7" fill="none" stroke="#777" stroke-dasharray="3 2" stroke-width="1.500"></circle></svg><i class="corner"></i></span>
          <span class="end-ic"><svg width="18" height="20" viewBox="0 0 18 20"><path d="M3.500 3.500h11v13h-11z" fill="#fff" stroke="#666"></path><path d="M5.500 3.500h7v5h-7zM5.500 11.500h7v5h-7z" fill="none" stroke="#666"></path></svg><i class="corner"></i></span>
          <span class="end-ic"><svg width="18" height="20" viewBox="0 0 18 20"><path d="M3 2h4l-1 3v12H4V5zM11 2v4h1V2h2v4h1V2h1v6l-1 1v8h-3V9l-2-1V2z" fill="#fff" stroke="#666" stroke-width=".8"></path></svg><i class="corner"></i></span>
        </div>

        <div class="bar2">
          <div class="market">코스닥<svg class="grip" width="6" height="6" viewBox="0 0 6 6"><path d="M6 0v6H0z" fill="#999"></path></svg></div>
          <div class="cell w1">887.68</div>
          <div class="cell w2">▼14.00</div>
          <div class="cell w3">-1.55%</div>
          <div class="cell n w4">728,059</div>
          <div class="cell k kw">시</div>
          <div class="cell w5">893.93</div>
          <div class="cell k kw">고</div>
          <div class="cell w5">895.42</div>
          <div class="cell k kw">저</div>
          <div class="cell w5">886.61</div>
          <div class="range">[1일]</div>
        </div>

        <div class="main">
          <div class="side">
            <div class="tabs">
              <div class="tab">종목</div><div class="tab on">지표</div><div class="tab">시스템</div>
            </div>
            <div class="finder">
              <div class="inp"></div>
              <div class="ib"><svg width="18" height="18" viewBox="0 0 18 18"><path d="M3 8a6 6 0 0 1 11-2l2-1v5h-5l2-2a4 4 0 0 0-7 1zM15 10a6 6 0 0 1-11 2l-2 1V8h5L5 10a4 4 0 0 0 7-1z" fill="#555"></path></svg></div>
              <div class="ib"><svg width="18" height="18" viewBox="0 0 18 18"><path d="M6 2h6v6h3l-6 5-6-5h3zM3 14h12v2H3z" fill="#777"></path></svg></div>
            </div>
            <div class="head">${folderIcon}유형</div>
            <div class="tree">
              <div class="row root-row">${openFolder}차트유형</div>
              ${TREE.map((s, i) => html`<div class="row">
                <span class="radio ${i === 2 ? 'on' : ''}"></span>
                <span class="rtext ${/^[가-힣]/.test(s) ? 'h' : ''} ${i === 2 ? 'sel' : ''}">${s}</span>
              </div>`)}
            </div>
            ${FOLDERS.map((s) => html`<div class="folder">${folderIcon}${s}</div>`)}
            <div class="foot"><span class="foot-label">즐겨찾기</span><span class="fbtn">등록</span><span class="fbtn">삭제</span></div>
          </div>

          <div class="chart">
            <div class="pane first">${this.mainPane()}</div>
            <div class="pane">${this.macdPane()}</div>
            <div class="pane">${this.oscPane()}</div>
            <div class="pane">${this.cciPane()}</div>
            ${this.dateAxis()}
            <div class="bottom">
              ${['업', '세', '순', '황'].map((s) => html`<span class="btab">${s}</span>`)}
              <span class="bbtn">◂</span>
              <span class="thumb"></span>
              <span class="bbtn nx">▸</span>
              <div class="ctrl">${this.bottomCtrl()}</div>
            </div>
          </div>

          <div class="tools">
            <div class="tcol">
              <div class="step"><i class="u"></i></div>
              <div class="step"><i class="d"></i></div>
              <div class="panel">
                <div class="lab">
                  ${INDICATORS.map((r) => html`<div class="ind">${r.map((l) => html`<span>${l}</span>`)}</div>`)}
                </div>
              </div>
            </div>
            <div class="tcol">
              <div class="step"><i class="u"></i></div>
              <div class="step"><i class="d k"></i></div>
              <div class="panel">
                <div class="icons">
                  ${TOOLS}
                  <div class="sep"></div>
                  ${TOOLS2}
                </div>
              </div>
            </div>
          </div>
        </div>
      </div>
    </div>`;
  }
}
